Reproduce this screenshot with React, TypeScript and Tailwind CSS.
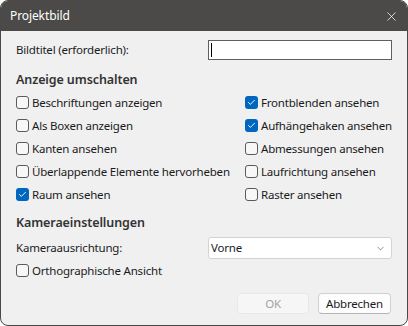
import React from "react";
import { X, ChevronDown, Check } from "lucide-react";

const font = { fontFamily: '"Noto Sans", "Liberation Sans", sans-serif' };

const Box = ({ checked }: { checked?: boolean }) =>
  checked ? (
    <span className="flex h-[13px] w-[13px] shrink-0 items-center justify-center rounded-[3px] bg-[#0067c0]">
      <Check className="h-[9px] w-[9px] text-white" strokeWidth={2.5} />
    </span>
  ) : (
    <span className="h-[13px] w-[13px] shrink-0 rounded-[3px] border border-[#5a5a5a] bg-[#f7f7f7]" />
  );

const Option = ({ label, checked }: { label: string; checked?: boolean }) => (
  <label className="flex h-[23px] items-center gap-[3px] whitespace-nowrap text-[11.5px] tracking-[-0.2px] text-[#1b1b1b]">
    <Box checked={checked} />
    <span>{label}</span>
  </label>
);

const left = [
  { label: "Beschriftungen anzeigen" },
  { label: "Als Boxen anzeigen" },
  { label: "Kanten ansehen" },
  { label: "Überlappende Elemente hervorheben" },
  { label: "Raum ansehen", checked: true },
];

const right = [
  { label: "Frontblenden ansehen", checked: true },
  { label: "Aufhängehaken ansehen", checked: true },
  { label: "Abmessungen ansehen" },
  { label: "Laufrichtung ansehen" },
  { label: "Raster ansehen" },
];

export default function App() {
  return (
    <div className="h-[326px] w-[408px] bg-white" style={font}>
      <div className="flex h-full w-full flex-col overflow-hidden rounded-[8px] border border-[#4a4947] bg-[#f0f0f0]">
        {/* Title bar */}
        <div className="flex h-[30px] shrink-0 items-center justify-between bg-[#4b4a48] pl-[9px] pr-[8px]">
          <span className="text-[12px] tracking-[-0.1px] text-white">Projektbild</span>
          <X className="h-[15px] w-[15px] text-white" strokeWidth={1.2} />
        </div>

        <div className="flex flex-col px-[15px] text-[11.5px] tracking-[-0.2px] text-[#1b1b1b]">
          {/* Bildtitel */}
          <div className="mt-[9px] grid h-[20px] grid-cols-[192px_184px] items-center">
            <span>Bildtitel (erforderlich):</span>
            <div className="flex h-[20px] items-center border border-[#5f5f5f] bg-white pl-[2px]">
              <span className="h-[14px] w-[1px] bg-black" />
            </div>
          </div>

          {/* Anzeige umschalten */}
          <div className="mt-[11px] flex h-[18px] items-center text-[12.5px] font-semibold tracking-[-0.1px] text-[#333]">
            Anzeige umschalten
          </div>
          <div className="mt-[2px] grid grid-cols-[229px_1fr]">
            <div className="flex flex-col">
              {left.map((o) => (
                <Option key={o.label} {...o} />
              ))}
            </div>
            <div className="flex flex-col">
              {right.map((o) => (
                <Option key={o.label} {...o} />
              ))}
            </div>
          </div>

          {/* Kameraeinstellungen */}
          <div className="mt-[8px] flex h-[18px] items-center text-[12.5px] font-semibold tracking-[-0.1px] text-[#333]">
            Kameraeinstellungen
          </div>
          <div className="mt-[5px] grid h-[22px] grid-cols-[192px_184px] items-center">
            <span>Kameraausrichtung:</span>
            <div className="flex h-[22px] items-center justify-between rounded-[3px] border border-[#d4d4d4] bg-white pl-[2px] pr-[5px]">
              <span>Vorne</span>
              <ChevronDown className="h-[11px] w-[11px] text-[#606060]" strokeWidth={1.5} />
            </div>
          </div>
          <Option label="Orthographische Ansicht" />

          {/* Buttons */}
          <div className="mt-[11px] flex justify-end gap-[9px] pr-[1px]">
            <button
              type="button"
              disabled
              className="flex h-[21px] w-[72px] items-center justify-center rounded-[4px] border border-[#e8e8e8] bg-[#f6f6f6] text-[#a3a3a3]"
            >
              OK
            </button>
            <button
              type="button"
              className="flex h-[21px] w-[73px] items-center justify-center rounded-[4px] border border-[#d0d0d0] border-b-[#b5b5b5] bg-[#fdfdfd] text-[#1b1b1b]"
            >
              Abbrechen
            </button>
          </div>
        </div>
      </div>
    </div>
  );
}
